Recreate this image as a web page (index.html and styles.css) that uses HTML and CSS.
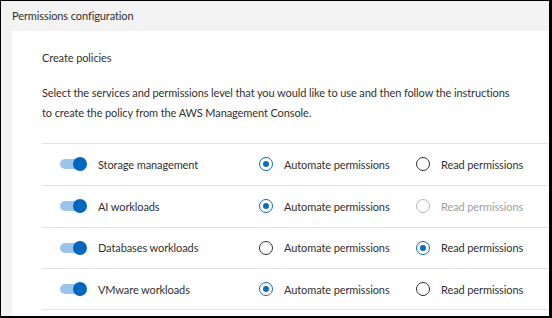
FILE: index.html
```html
<!DOCTYPE html>
<html>
<head>
<meta charset="utf-8">
<link rel="stylesheet" href="styles.css">
</head>
<body>
<div class="frame">
  <div class="header">Permissions configuration</div>
  <div class="panel">
    <div class="title">Create policies</div>
    <p class="desc">Select the services and permissions level that you would like to use and then follow the instructions to create the policy from the AWS Management Console.</p>
    <div class="rows">
      <div class="row">
        <span class="toggle"><span class="knob"></span></span>
        <span class="label">Storage management</span>
        <span class="opt"><span class="radio on"></span>Automate permissions</span>
        <span class="opt"><span class="radio"></span>Read permissions</span>
      </div>
      <div class="row">
        <span class="toggle"><span class="knob"></span></span>
        <span class="label">AI workloads</span>
        <span class="opt"><span class="radio on"></span>Automate permissions</span>
        <span class="opt disabled"><span class="radio"></span>Read permissions</span>
      </div>
      <div class="row">
        <span class="toggle"><span class="knob"></span></span>
        <span class="label">Databases workloads</span>
        <span class="opt"><span class="radio"></span>Automate permissions</span>
        <span class="opt"><span class="radio on"></span>Read permissions</span>
      </div>
      <div class="row">
        <span class="toggle"><span class="knob"></span></span>
        <span class="label">VMware workloads</span>
        <span class="opt"><span class="radio on"></span>Automate permissions</span>
        <span class="opt"><span class="radio"></span>Read permissions</span>
      </div>
    </div>
  </div>
</div>
</body>
</html>
```
FILE: styles.css
```css
* { box-sizing: border-box; }
html, body { margin: 0; padding: 0; }
body {
  font-family: "Lato", "Noto Sans", sans-serif;
  font-size: 11px;
  letter-spacing: -0.1px;
  color: #323130;
}
.frame {
  width: 552px;
  height: 318px;
  border-style: solid;
  border-color: #000;
  border-width: 1px 3px 2px 1px;
  background: #f3f3f3;
  display: flex;
  flex-direction: column;
  overflow: hidden;
}
.header {
  height: 30px;
  line-height: 30px;
  padding-left: 11px;
  flex: none;
}
.panel {
  flex: 1;
  margin-left: 11px;
  background: #fff;
  padding: 19px 0 0 30px;
  overflow: hidden;
}
.title {
  line-height: 16px;
}
.desc {
  margin: 17px 0 0 0;
  line-height: 20px;
  width: 478px;
}
.rows {
  margin-top: 20px;
  width: 560px;
}
.row {
  display: flex;
  align-items: center;
  height: 41.75px;
  border-top: 1.5px solid #e3e3e3;
}
.row:last-child { border-bottom: 1.5px solid #e3e3e3; }
.toggle {
  position: relative;
  width: 27px;
  height: 10px;
  margin-left: 18px;
  flex: none;
}
.toggle::before {
  content: "";
  position: absolute;
  left: 0;
  top: 0;
  width: 22px;
  height: 10px;
  border-radius: 5px;
  background: #9cc3ec;
}
.knob {
  position: absolute;
  right: 0;
  top: -2px;
  width: 14px;
  height: 14px;
  border-radius: 50%;
  background: #0067c0;
}
.label {
  margin-left: 11px;
  width: 161px;
  flex: none;
}
.opt {
  display: flex;
  align-items: center;
  width: 157px;
  flex: none;
}
.radio {
  width: 14px;
  height: 14px;
  border: 1px solid #323130;
  border-radius: 50%;
  margin-right: 11px;
  flex: none;
  display: flex;
  align-items: center;
  justify-content: center;
}
.radio.on { border-color: #0f6cbd; }
.radio.on::after {
  content: "";
  width: 6px;
  height: 6px;
  border-radius: 50%;
  background: #0f6cbd;
}
.opt.disabled { color: #a19f9d; }
.opt.disabled .radio { border-color: #b8b6b4; }
```
